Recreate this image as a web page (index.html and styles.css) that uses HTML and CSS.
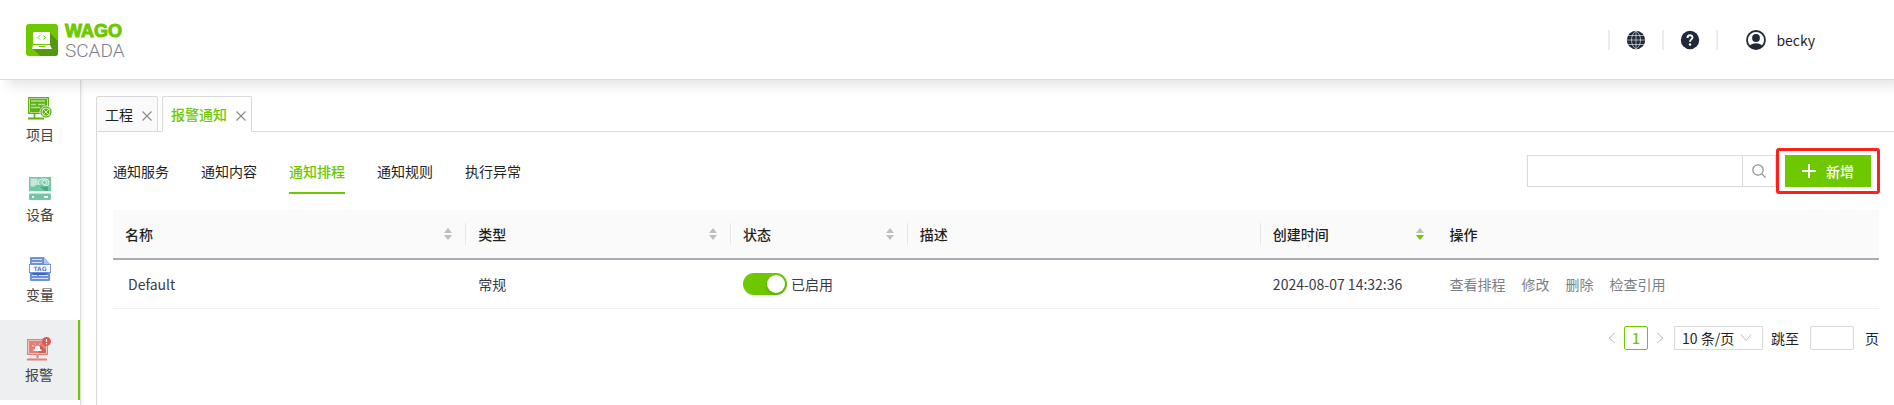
FILE: index.html
```html
<!DOCTYPE html>
<html lang="zh-CN">
  <head>
    <meta charset="utf-8">
    <title>WAGO SCADA</title>
    <link rel="stylesheet" href="styles.css">
  </head>
  <body>
    <header class="header">
      <a class="logo" href="#">
        <svg width="32" height="32" viewBox="0 0 32 32">
          <rect width="32" height="32" rx="3" fill="#6ec800"/>
          <path d="M24 9l8 8v12a3 3 0 0 1-3 3H14l-8-8 18-3z" fill="#559710"/>
          <rect x="7" y="8" width="17" height="12" rx="1" fill="#fff"/>
          <path d="M7 21h17l2 4H6z" fill="#fff"/>
          <path d="M13 22.500h6" stroke="#6ec800"/>
          <path d="M14 11.500l-2 2 2 2M17.500 11.500l2 2-2 2" fill="none" stroke="#6ec800"/>
        </svg>
        <span class="logo-text">
          <span class="logo-wago">WAGO</span>
          <span class="logo-scada">SCADA</span>
        </span>
      </a>
      <nav class="header-tools">
        <button class="tool" type="button" aria-label="语言">
          <svg width="20" height="20" viewBox="0 0 20 20">
            <circle cx="10" cy="10" r="9.200" fill="#1f2937"/>
            <path d="M10 1v18M1.500 5.500h17M1 10h18M1.500 14.500h17M10 1C4 4.500 4 15.500 10 19M10 1c6 3.500 6 14.500 0 18" fill="none" stroke="#fff" stroke-width=".6"/>
          </svg>
        </button>
        <button class="tool" type="button" aria-label="帮助">
          <svg width="20" height="20" viewBox="0 0 20 20">
            <circle cx="10" cy="10" r="9.200" fill="#1f2937"/>
            <path d="M7.500 8c0-3.600 5-3.400 5-.5 0 1.900-2.500 1.900-2.500 4.300" fill="none" stroke="#fff" stroke-width="1.900"/>
            <circle cx="10" cy="14.500" r="1.200" fill="#fff"/>
          </svg>
        </button>
        <a class="user" href="#">
          <svg width="20" height="20" viewBox="0 0 20 20">
            <circle cx="10" cy="10" r="9" fill="#fff" stroke="#1f2937" stroke-width="1.800"/>
            <circle cx="10" cy="8" r="3.900" fill="#1f2937"/>
            <path d="M3.500 16c2.500-3.600 10.500-3.600 13 0-3 4-10 4-13 0z" fill="#1f2937"/>
          </svg>
          <span>becky</span>
        </a>
      </nav>
    </header>

    <div class="layout">
      <aside class="sidebar">
        <a class="side-item" href="#">
          <svg width="24" height="24" viewBox="0 0 24 24">
            <path d="M.7.700h19.600v15.600H.7z" fill="#fff" stroke="#5cb114" stroke-width="1.400"/>
            <path d="M2 2h17v13H2z" fill="#5cb114"/>
            <path d="M3 4h14M3 7.500h5M10 7.500h7M3 10.500h9" stroke="#b4dc8d" stroke-width="1.600"/>
            <path d="M6.500 17v3.500M0 21.500h16" stroke="#5cb114" stroke-width="1.800"/>
            <circle cx="18" cy="15" r="6" fill="#5cb114" stroke="#fff" stroke-width=".7"/>
            <circle cx="18" cy="15" r="4" fill="none" stroke="#d5edbf"/>
            <path d="M14.500 11.500l7 7M21.500 11.500l-7 7" stroke="#d5edbf"/>
          </svg>
          <span>项目</span>
        </a>
        <a class="side-item" href="#">
          <svg width="24" height="24" viewBox="0 0 24 24">
            <path d="M1 0h22v14H1z" fill="#73c7a5"/>
            <path d="M2.500 1.500h7v8h-7z" fill="#c4e9dc"/>
            <rect x="10" y="2" width="11" height="7" rx="3.500" fill="#94d8be" stroke="#e4f5ee"/>
            <circle cx="16.500" cy="5.500" r="2" fill="#73c7a5" stroke="#e4f5ee"/>
            <path d="M2 15L8 8h7l6 6z" fill="#73c7a5"/>
            <path d="M12 10l8-1v5h-3z" fill="#51a784"/>
            <path d="M1 14h22v1.500H1z" fill="#d6f0e6"/>
            <rect x="1" y="16.500" width="22" height="6.500" rx="1" fill="#73c7a5"/>
            <path d="M4 19.800h2M16 19.800h4" stroke="#fff" stroke-width="1.800"/>
          </svg>
          <span>设备</span>
        </a>
        <a class="side-item" href="#">
          <svg width="24" height="24" viewBox="0 0 24 24">
            <path d="M3 0h13l6 7v16a1 1 0 0 1-1 1H3a1 1 0 0 1-1-1V1a1 1 0 0 1 1-1z" fill="#6f91dc"/>
            <path d="M16 0l6 7h-6z" fill="#a9c3f8"/>
            <path d="M4 2.500h10M4 5.500h10M4 18.500h5M11 18.500h9M4 21.500h16" stroke="#d8e3fb" stroke-width="1.200"/>
            <path d="M3 16h18l-4 2H6z" fill="#3d67bd"/>
            <rect x="1.500" y="7.500" width="21" height="8" fill="#fff" stroke="#6f91dc"/>
            <text class="tag-text" x="12" y="14" text-anchor="middle">TAG</text>
          </svg>
          <span>变量</span>
        </a>
        <a class="side-item side-item-active" href="#">
          <svg width="24" height="24" viewBox="0 0 24 24">
            <path d="M.7 2.700h19.600v14.600H.7z" fill="#fff" stroke="#e67e78" stroke-width="1.400"/>
            <path d="M2 4h17v12H2z" fill="#e67e78"/>
            <path d="M13 8l6 5v3h-8z" fill="#c9625c"/>
            <path d="M8 12.500V10q2.500-2.500 5 0v2.500zM6.500 12.500h8V14h-8z" fill="#fff"/>
            <path d="M5 8.500l1.500.7M8 6.500l.5 1M12.500 7.500l.5-1" stroke="#fff" stroke-width=".7"/>
            <path d="M10.500 17.500V21M0 22.500h20" stroke="#e67e78" stroke-width="2"/>
            <circle cx="19.500" cy="4.500" r="4.500" fill="#d95c55"/>
            <path d="M19.500 2v3M19.500 6v1.200" stroke="#fff" stroke-width="1.200"/>
          </svg>
          <span>报警</span>
        </a>
      </aside>

      <main class="main">
        <div class="page-tabs">
          <div class="page-tab">
            <a href="#">工程</a>
            <button class="tab-close" type="button" aria-label="关闭">
              <svg width="10" height="10" viewBox="0 0 10 10"><path d="M.5.500l9 9M9.500.500l-9 9"/></svg>
            </button>
          </div>
          <div class="page-tab page-tab-active">
            <a href="#">报警通知</a>
            <button class="tab-close" type="button" aria-label="关闭">
              <svg width="10" height="10" viewBox="0 0 10 10"><path d="M.5.500l9 9M9.500.500l-9 9"/></svg>
            </button>
          </div>
        </div>

        <section class="panel">
          <div class="toolbar">
            <nav class="sub-tabs">
              <a class="sub-tab" href="#">通知服务</a>
              <a class="sub-tab" href="#">通知内容</a>
              <a class="sub-tab sub-tab-active" href="#">通知排程</a>
              <a class="sub-tab" href="#">通知规则</a>
              <a class="sub-tab" href="#">执行异常</a>
            </nav>
            <div class="search">
              <input class="search-input" type="text" aria-label="搜索">
              <button class="search-btn" type="button" aria-label="搜索">
                <svg width="14" height="14" viewBox="0 0 14 14" fill="none" stroke="#8c8c8c" stroke-width="1.200">
                  <circle cx="6" cy="6" r="5.200"/>
                  <path d="M9.800 9.800l3.700 3.700"/>
                </svg>
              </button>
            </div>
            <div class="add-wrap">
              <button class="add-btn" type="button">
                <svg width="14" height="14" viewBox="0 0 14 14"><path d="M7 0v14M0 7h14" stroke="#fff" stroke-width="2"/></svg>
                <span>新增</span>
              </button>
            </div>
          </div>

          <table class="table">
            <colgroup>
              <col class="col-20"><col class="col-15"><col class="col-10">
              <col class="col-20"><col class="col-10"><col class="col-25">
            </colgroup>
            <thead>
              <tr>
                <th class="split"><div class="th-inner">名称
                  <svg class="sorter" width="8" height="12" viewBox="0 0 8 12"><path d="M0 5l4-5 4 5z"/><path d="M0 7h8l-4 5z"/></svg></div></th>
                <th class="split"><div class="th-inner">类型
                  <svg class="sorter" width="8" height="12" viewBox="0 0 8 12"><path d="M0 5l4-5 4 5z"/><path d="M0 7h8l-4 5z"/></svg></div></th>
                <th class="split"><div class="th-inner">状态
                  <svg class="sorter" width="8" height="12" viewBox="0 0 8 12"><path d="M0 5l4-5 4 5z"/><path d="M0 7h8l-4 5z"/></svg></div></th>
                <th class="split"><div class="th-inner">描述</div></th>
                <th><div class="th-inner">创建时间
                  <svg class="sorter" width="8" height="12" viewBox="0 0 8 12"><path d="M0 5l4-5 4 5z"/><path class="sort-on" d="M0 7h8l-4 5z"/></svg></div></th>
                <th><div class="th-inner">操作</div></th>
              </tr>
            </thead>
            <tbody>
              <tr>
                <td class="name-cell">Default</td>
                <td>常规</td>
                <td>
                  <label class="status">
                    <input class="switch" type="checkbox" role="switch" checked>
                    <span>已启用</span>
                  </label>
                </td>
                <td></td>
                <td>2024-08-07 14:32:36</td>
                <td>
                  <div class="actions">
                    <a href="#">查看排程</a>
                    <a href="#">修改</a>
                    <a href="#">删除</a>
                    <a href="#">检查引用</a>
                  </div>
                </td>
              </tr>
            </tbody>
          </table>

          <div class="pagination">
            <button class="page-arrow" type="button" aria-label="上一页" disabled>
              <svg width="8" height="12" viewBox="0 0 8 12"><path d="M7 1L1 6l6 5"/></svg>
            </button>
            <button class="page-num" type="button">1</button>
            <button class="page-arrow" type="button" aria-label="下一页" disabled>
              <svg width="8" height="12" viewBox="0 0 8 12"><path d="M1 1l6 5-6 5"/></svg>
            </button>
            <div class="page-size">
              <select aria-label="每页条数">
                <option>10 条/页</option>
                <option>20 条/页</option>
                <option>50 条/页</option>
              </select>
              <svg class="chevron" width="12" height="8" viewBox="0 0 12 8"><path d="M1 .5l5 6 5-6"/></svg>
            </div>
            <label class="jumper">跳至 <input type="text"> 页</label>
          </div>
        </section>
      </main>
    </div>
  </body>
</html>
```
FILE: styles.css
```css
* {
  box-sizing: border-box;
}

body {
  margin: 0;
  min-height: 100vh;
  display: flex;
  flex-direction: column;
  overflow: hidden;
  background: #fff;
  color: #1f1f1f;
  font: 14px/20px "Noto Sans CJK SC", sans-serif;
}

a {
  color: inherit;
  text-decoration: none;
}

button,
input,
select {
  margin: 0;
  padding: 0;
  border: 0;
  background: none;
  color: inherit;
  font: inherit;
}

svg {
  display: block;
  flex: none;
}

/* Header */
.header {
  position: relative;
  z-index: 2;
  height: 80px;
  padding: 0 79px 0 26px;
  display: flex;
  align-items: center;
  justify-content: space-between;
  background: #fff;
  border-bottom: 1px solid #dededc;
  border-top-left-radius: 8px;
  box-shadow: 8px 6px 12px rgba(0, 0, 0, 0.1);
}

.logo {
  display: flex;
  align-items: center;
  gap: 7px;
}

.logo-text {
  display: flex;
  flex-direction: column;
  padding-top: 2px;
  line-height: 19px;
}

.logo-wago {
  color: #6ec800;
  font-family: "Liberation Sans", sans-serif;
  font-size: 18px;
  font-weight: 700;
  -webkit-text-stroke: 1px #6ec800;
}

.logo-scada {
  color: #7b7f8a;
  font-family: Roboto, sans-serif;
  font-size: 19px;
  font-weight: 300;
}

.header-tools {
  display: flex;
  align-items: center;
}

.tool {
  width: 54px;
  height: 20px;
  display: flex;
  justify-content: center;
  border-left: 2px solid #ededed;
}

.user {
  display: flex;
  align-items: center;
  gap: 10px;
  height: 20px;
  padding-left: 28px;
  border-left: 2px solid #ededed;
}

.layout {
  flex: 1;
  display: flex;
}

/* Sidebar */
.sidebar {
  width: 81px;
  flex: none;
  border-right: 1px solid #dedede;
  box-shadow: 1px 0 3px rgba(0, 0, 0, 0.08);
}

.side-item {
  height: 80px;
  padding-top: 17px;
  display: flex;
  flex-direction: column;
  align-items: center;
  gap: 3px;
  color: #434343;
}

.side-item-active {
  background: #eeeff1;
  border-right: 2px solid #6ec800;
}

.tag-text {
  fill: #5b80d0;
  font: bold 6px "DejaVu Sans", sans-serif;
}

/* Page tabs */
.main {
  flex: 1;
  min-width: 0;
  padding: 16px 0 0 15px;
  display: flex;
  flex-direction: column;
}

.page-tabs {
  display: flex;
  gap: 4px;
  border-bottom: 1px solid #d9d9d9;
}

.page-tab {
  height: 36px;
  margin-bottom: -1px;
  padding: 0 5px 0 8px;
  display: flex;
  align-items: center;
  gap: 9px;
  background: #fafafa;
  border: 1px solid #d9d9d9;
  border-radius: 2px 2px 0 0;
}

.page-tab-active {
  background: #fff;
  border-bottom-color: #fff;
  color: #6ec800;
  font-weight: 500;
}

.tab-close {
  padding-top: 4px;
}

.tab-close path {
  stroke: #8c8c8c;
  stroke-width: 1.2;
}

.panel {
  flex: 1;
  padding: 16px 15px 0 16px;
  border-left: 1px solid #d9d9d9;
}

/* Toolbar */
.toolbar {
  height: 62px;
  padding-right: 8px;
  display: flex;
  align-items: flex-start;
}

.sub-tabs {
  flex: 1;
  display: flex;
  gap: 32px;
}

.sub-tab {
  height: 46px;
  padding-top: 13px;
}

.sub-tab-active {
  border-bottom: 2px solid #6ec800;
  color: #6ec800;
  font-weight: 500;
}

.search {
  display: flex;
  margin-top: 7px;
}

.search-input {
  width: 216px;
  height: 32px;
  padding: 0 11px;
  border: 1px solid #d9d9d9;
}

.search-btn {
  width: 34px;
  height: 32px;
  margin-left: -1px;
  display: flex;
  align-items: center;
  justify-content: center;
  border: 1px solid #d9d9d9;
}

.add-wrap {
  position: relative;
  margin: 7px 0 0 9px;
}

/* Highlight frame around the add button */
.add-wrap::after {
  content: "";
  position: absolute;
  inset: -7px -9px;
  border: 3px solid #ff1f1a;
  border-radius: 3px;
  pointer-events: none;
}

.add-btn {
  height: 32px;
  padding: 0 17px;
  display: flex;
  align-items: center;
  gap: 10px;
  background: #6ec800;
  color: #fff;
  font-weight: 500;
}

/* Table */
.table {
  width: 100%;
  table-layout: fixed;
  border-collapse: separate;
  border-spacing: 0;
}

.col-10 {
  width: 10%;
}

.col-15 {
  width: 15%;
}

.col-20 {
  width: 20%;
}

.col-25 {
  width: 25%;
}

.table th {
  height: 50px;
  padding: 0;
  background: #fafafa;
  border-bottom: 2px solid #a9abb2;
  font-weight: 500;
  text-align: left;
}

.th-inner {
  height: 22px;
  padding: 0 13px 0 12px;
  display: flex;
  align-items: center;
  justify-content: space-between;
}

.split .th-inner {
  border-right: 1px solid #e8e8e8;
}

.sorter {
  fill: #bfbfbf;
}

.sort-on {
  fill: #6ec800;
}

.table td {
  height: 49px;
  padding: 0 12px;
  border-bottom: 1px solid #f0f0f0;
  color: #3a3a48;
}

.table .name-cell {
  padding-left: 15px;
}

.status {
  display: flex;
  align-items: center;
  gap: 4px;
}

.switch {
  appearance: none;
  width: 44px;
  height: 22px;
  padding: 2px;
  display: flex;
  justify-content: flex-end;
  border-radius: 11px;
  background: #6ec800;
}

.switch::before {
  content: "";
  width: 18px;
  height: 18px;
  border-radius: 50%;
  background: #fff;
  box-shadow: 0 2px 4px rgba(0, 35, 11, 0.2);
}

.table .actions {
  display: flex;
  gap: 16px;
  color: #7b7f87;
}

/* Pagination */
.pagination {
  margin-top: 17px;
  display: flex;
  align-items: center;
  justify-content: flex-end;
}

.page-arrow {
  width: 24px;
  height: 24px;
  display: flex;
  align-items: center;
  justify-content: center;
}

.page-arrow path,
.chevron path {
  fill: none;
  stroke: #bfbfbf;
}

.page-num {
  width: 24px;
  height: 24px;
  border: 1px solid #6ec800;
  border-radius: 2px;
  color: #6ec800;
  font-weight: 500;
  line-height: 22px;
}

.page-size {
  position: relative;
  margin: 0 8px 0 2px;
}

.page-size select {
  appearance: none;
  width: 89px;
  height: 24px;
  padding: 0 7px;
  border: 1px solid #d9d9d9;
}

.chevron {
  position: absolute;
  top: 8px;
  right: 11px;
  pointer-events: none;
}

.jumper {
  display: flex;
  align-items: center;
  gap: 11px;
}

.jumper input {
  width: 44px;
  height: 24px;
  padding: 0 7px;
  border: 1px solid #d9d9d9;
  border-radius: 2px;
}
```
